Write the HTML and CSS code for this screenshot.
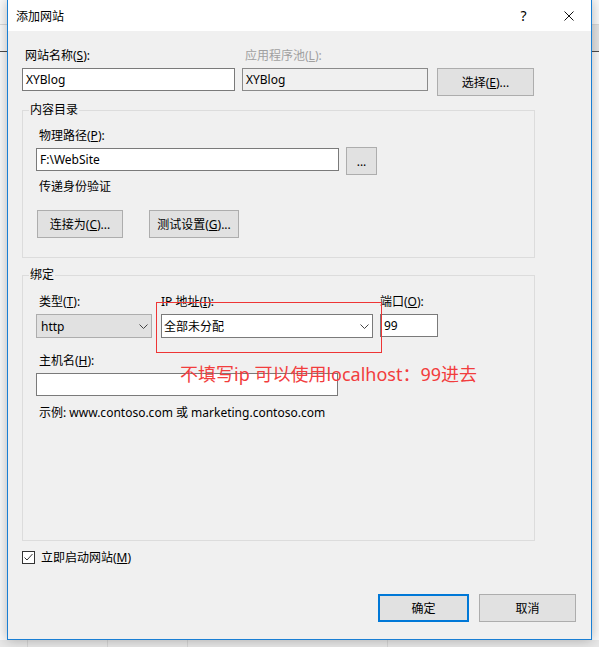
FILE: index.html
```html
<!DOCTYPE html>
<html lang="zh-CN">
<head>
<meta charset="utf-8">
<title>添加网站</title>
<link rel="stylesheet" href="styles.css">
</head>
<body>
<div class="dialog">
  <div class="titlebar">
    <span class="title">添加网站</span>
    <span class="cap cap-help">?</span>
    <span class="cap cap-close"><svg width="10" height="10" viewBox="0 0 10 10"><path d="M0.5 0.5L9.5 9.5M9.5 0.5L0.5 9.5" stroke="#111" stroke-width="1" fill="none"/></svg></span>
  </div>
  <div class="body">
    <div class="row">
      <div class="field f-name">
        <div class="lbl">网站名称(<u>S</u>):</div>
        <div class="textbox">XYBlog</div>
      </div>
      <div class="field f-pool">
        <div class="lbl lbl-disabled">应用程序池(<u>L</u>):</div>
        <div class="textbox textbox-disabled">XYBlog</div>
      </div>
      <div class="btn btn-select">选择(<u>E</u>)...</div>
    </div>

    <div class="group group-content">
      <div class="group-title">内容目录</div>
      <div class="group-body">
        <div class="lbl">物理路径(<u>P</u>):</div>
        <div class="row">
          <div class="textbox tb-path">F:\WebSite</div>
          <div class="btn btn-browse">...</div>
        </div>
        <div class="lbl auth-label">传递身份验证</div>
        <div class="row auth-buttons">
          <div class="btn btn-connect">连接为(<u>C</u>)...</div>
          <div class="btn btn-test">测试设置(<u>G</u>)...</div>
        </div>
      </div>
    </div>

    <div class="group group-binding">
      <div class="group-title">绑定</div>
      <div class="group-body">
        <div class="row">
          <div class="field f-type">
            <div class="lbl">类型(<u>T</u>):</div>
            <div class="select select-gray"><span>http</span><svg width="9" height="5" viewBox="0 0 9 5"><path d="M0.5 0.5L4.5 4.5L8.5 0.5" stroke="#444" fill="none"/></svg></div>
          </div>
          <div class="field f-ip">
            <div class="lbl lbl-flush">IP 地址(<u>I</u>):</div>
            <div class="select"><span>全部未分配</span><svg width="9" height="5" viewBox="0 0 9 5"><path d="M0.5 0.5L4.5 4.5L8.5 0.5" stroke="#444" fill="none"/></svg></div>
          </div>
          <div class="field f-port">
            <div class="lbl lbl-flush">端口(<u>O</u>):</div>
            <div class="textbox">99</div>
          </div>
        </div>
        <div class="field f-host">
          <div class="lbl">主机名(<u>H</u>):</div>
          <div class="textbox tb-host"></div>
        </div>
        <div class="lbl example">示例: www.contoso.com 或 marketing.contoso.com</div>
      </div>
    </div>

    <div class="check">
      <span class="checkbox"><svg width="11" height="11" viewBox="0 0 11 11"><path d="M1.5 5.5L4 8L9.5 2" stroke="#333" stroke-width="1" fill="none"/></svg></span>
      <span class="check-label">立即启动网站(<u>M</u>)</span>
    </div>

    <div class="actions">
      <div class="btn btn-ok">确定</div>
      <div class="btn btn-cancel">取消</div>
    </div>
  </div>

  <div class="callout-box"></div>
  <div class="callout-text">不填写ip 可以使用localhost：99进去</div>
</div>
</body>
</html>
```

FILE: styles.css
```css
* { box-sizing: border-box; }

html, body { margin: 0; padding: 0; }

body {
  width: 599px;
  height: 647px;
  overflow: hidden;
  font-family: "Noto Sans", "Noto Sans CJK SC", sans-serif;
  font-size: 12px;
  color: #000;
  background:
    linear-gradient(#d6d6d6, #d6d6d6) 27px 640px / 1px 7px no-repeat,
    linear-gradient(#d6d6d6, #d6d6d6) 107px 640px / 1px 7px no-repeat,
    linear-gradient(#d6d6d6, #d6d6d6) 187px 640px / 1px 7px no-repeat,
    linear-gradient(#d6d6d6, #d6d6d6) 387px 640px / 1px 7px no-repeat,
    linear-gradient(#e8e8e8, #e8e8e8) 0 640px / 100% 7px no-repeat,
    linear-gradient(#dadada, #dadada) 0 24px / 100% 1px no-repeat,
    linear-gradient(#4d4d4d, #4d4d4d) 0 51px / 100% 1px no-repeat,
    linear-gradient(#e4e4e4, #e4e4e4) 592px 25px / 7px 26px no-repeat,
    #fafafa;
}

u { text-decoration: underline; text-underline-offset: 1px; text-decoration-thickness: 1px; }

.dialog {
  position: relative;
  width: 585px;
  height: 640px;
  margin-left: 7px;
  background: #f0f0f0;
  border: 1px solid #1a7fd4;
  border-top: 0;
  box-shadow: 0 0 12px rgba(0, 0, 0, 0.28);
}

.titlebar {
  display: flex;
  align-items: center;
  height: 31px;
  background: #fff;
}

.title { flex: 1; padding-left: 8px; }

.cap {
  width: 45px;
  height: 31px;
  display: flex;
  align-items: center;
  justify-content: center;
}

.cap-help { font-size: 14px; font-family: "Noto Sans", sans-serif; }

.body { padding: 17px 0 0 14px; }

.row { display: flex; align-items: flex-start; }

.lbl {
  height: 16px;
  line-height: 16px;
  margin-bottom: 4px;
  padding-left: 3px;
  white-space: nowrap;
}

.lbl-disabled { color: #a0a0a0; }
.lbl-flush { padding-left: 0; }

.textbox {
  height: 23px;
  line-height: 21px;
  border: 1px solid #7a7a7a;
  background: #fff;
  padding-left: 3px;
  white-space: nowrap;
}

.textbox-disabled { background: #f0f0f0; border-color: #8a8a8a; }

.btn {
  height: 28px;
  border: 1px solid #adadad;
  background: #e1e1e1;
  display: flex;
  align-items: center;
  justify-content: center;
  white-space: nowrap;
}

.f-name { width: 213px; }
.f-pool { width: 186px; margin-left: 7px; }
.btn-select { width: 97px; margin: 20px 0 0 9px; }

.group { width: 513px; border: 1px solid #dcdcdc; }

.group-title {
  width: fit-content;
  margin: -9px 0 0 6px;
  padding: 0 1px;
  line-height: 16px;
  background: #f0f0f0;
}

.group-content { margin-top: 14px; }
.group-content .group-body { padding: 10px 0 19px 13px; }

.tb-path { width: 303px; }
.btn-browse { width: 31px; margin: -1px 0 0 7px; }

.auth-label { margin: 4px 0 0; }
.auth-buttons { margin-top: 15px; }
.btn-connect { width: 86px; margin-left: 1px; }
.btn-test { width: 90px; margin-left: 26px; }

.group-binding { margin-top: 17px; height: 266px; }
.group-binding .group-body { padding: 11px 0 0 13px; }

.f-type { width: 116px; }
.f-ip { width: 212px; margin-left: 9px; }
.f-port { width: 58px; margin-left: 7px; }

.select {
  height: 24px;
  border: 1px solid #7a7a7a;
  background: #fff;
  display: flex;
  align-items: center;
  justify-content: space-between;
  padding: 0 3px 0 2px;
}

.select-gray { background: #e1e1e1; border-color: #adadad; padding-left: 4px; }

.f-host { margin-top: 15px; }
.tb-host { width: 302px; }

.example { margin-top: 9px; }

.check {
  display: flex;
  align-items: center;
  height: 16px;
  margin-top: 8px;
}

.checkbox {
  width: 13px;
  height: 13px;
  border: 1px solid #333;
  background: #fff;
  display: flex;
}

.check-label { margin-left: 6px; }

.actions {
  display: flex;
  justify-content: flex-end;
  margin-top: 29px;
  padding-right: 15px;
}

.btn-ok { width: 91px; border: 2px solid #0078d7; }
.btn-cancel { width: 97px; margin-left: 10px; }

.callout-box {
  position: absolute;
  left: 148px;
  top: 302px;
  width: 226px;
  height: 51px;
  border: 1px solid #ee3535;
}

.callout-text {
  position: absolute;
  left: 172px;
  top: 362px;
  font-size: 18px;
  line-height: 24px;
  color: #f23d3d;
  white-space: nowrap;
}
```
